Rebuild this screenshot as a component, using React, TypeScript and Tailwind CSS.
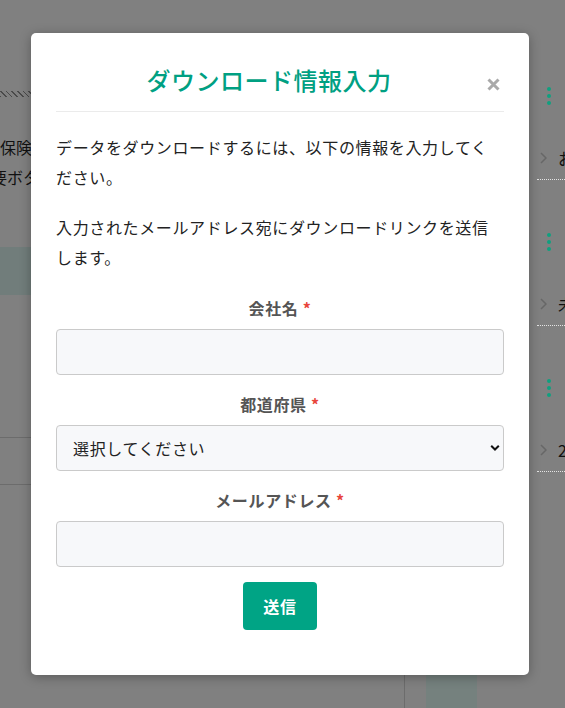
import React from "react";

const sideItems = [
  { id: 1, label: "お知らせ" },
  { id: 2, label: "未読" },
  { id: 3, label: "2024" },
];

function BackgroundPage() {
  return (
    <div className="flex h-full">
      <main className="flex w-[529px] shrink-0 flex-col overflow-hidden">
        <div className="mt-[91px] h-[6px] w-full bg-[repeating-linear-gradient(45deg,#4a4a4a_0px,#4a4a4a_1px,transparent_1px,transparent_4px)]" />
        <div className="mt-[35px] text-[16px] leading-[30px] text-[#111] whitespace-nowrap">
          <p>保険</p>
          <p className="-ml-[9px]">要ボタン</p>
        </div>
        <div className="mt-[55px] h-[48px] w-full bg-[#717d7b]" />
        <div className="mt-[142px] h-[48px] w-full border-y border-[#6c6c6c]" />
        <div className="mt-auto flex h-[40px]">
          <div className="w-[405px] shrink-0 border-r border-[#6c6c6c]" />
          <div className="ml-[21px] w-[51px] bg-[#75817e]" />
        </div>
      </main>
      <aside className="min-w-0 flex-1 overflow-hidden pl-[8px] pt-[34px]">
        {sideItems.map((item) => (
          <div
            key={item.id}
            className="flex h-[146px] flex-col border-b border-dotted border-[#e4e4e4]"
          >
            <div className="ml-[10px] mt-[53px] flex flex-col gap-[3px]">
              <span className="h-1 w-1 rounded-full bg-[#0fa07f]" />
              <span className="h-1 w-1 rounded-full bg-[#0fa07f]" />
              <span className="h-1 w-1 rounded-full bg-[#0fa07f]" />
            </div>
            <div className="mt-[41px] flex h-6 items-center gap-[11px] whitespace-nowrap pl-[3px]">
              <svg width="7" height="12" viewBox="0 0 7 12" fill="none" className="shrink-0">
                <path d="M1 1l5 5-5 5" stroke="#676767" strokeWidth="1.5" />
              </svg>
              <span className="text-[16px] text-[#111]">{item.label}</span>
            </div>
          </div>
        ))}
      </aside>
    </div>
  );
}

function Field({ label, children, first }: { label: string; children: React.ReactNode; first?: boolean }) {
  return (
    <div className={first ? "" : "mt-[17px]"}>
      <label className="mb-2 block text-center text-[16px] font-bold leading-[25px] tracking-[0.04em] text-[#555]">
        {label} <span className="text-[#e8453c]">*</span>
      </label>
      {children}
    </div>
  );
}

function DownloadModal() {
  return (
    <div className="absolute left-[31px] top-[33px] w-[498px] rounded-[5px] bg-white px-[25px] pb-[45px] pt-[29px] shadow-[0_2px_12px_rgba(0,0,0,0.3)]">
      <div className="flex items-start border-b border-[#ebebeb] pb-[13px]">
        <h2 className="flex-1 text-center text-[24px] font-medium leading-[36px] tracking-[0.02em] text-[#00a082]">
          ダウンロード情報入力
        </h2>
        <button type="button" className="mt-[16px] flex w-[22px] justify-center">
          <svg width="13" height="13" viewBox="0 0 13 13">
            <path d="M1.5 1.5l10 10M11.5 1.5l-10 10" stroke="#a9a9a9" strokeWidth="3" />
          </svg>
        </button>
      </div>

      <div className="text-[16px] leading-[29.6px] tracking-[0.04em] text-[#222]">
        <p className="mt-[21px]">データをダウンロードするには、以下の情報を入力してください。</p>
        <p className="mt-[21px]">入力されたメールアドレス宛にダウンロードリンクを送信します。</p>
      </div>

      <form className="mt-[24px]" onSubmit={(e) => e.preventDefault()}>
        <Field label="会社名" first>
          <input
            type="text"
            className="block h-[46px] w-full rounded-[4px] border border-[#cacaca] bg-[#f7f8fa] px-4 text-[16px] outline-none"
          />
        </Field>
        <Field label="都道府県">
          <div className="relative">
            <select className="block h-[46px] w-full appearance-none rounded-[4px] border border-[#cacaca] bg-[#f7f8fa] pl-[16px] text-[16px] tracking-[0.04em] text-[#222] outline-none">
              <option>選択してください</option>
              <option>東京都</option>
              <option>大阪府</option>
            </select>
            <svg
              width="10"
              height="7"
              viewBox="0 0 10 7"
              className="pointer-events-none absolute right-[4px] top-1/2 -translate-y-1/2"
            >
              <path d="M1.2 1.2L5 5l3.8-3.8" stroke="#111" strokeWidth="2" fill="none" />
            </svg>
          </div>
        </Field>
        <Field label="メールアドレス">
          <input
            type="email"
            className="block h-[46px] w-full rounded-[4px] border border-[#cacaca] bg-[#f7f8fa] px-4 text-[16px] outline-none"
          />
        </Field>
        <button
          type="submit"
          className="mx-auto mt-[15px] block h-[48px] w-[74px] rounded-[4px] bg-[#00a485] text-[16px] font-bold tracking-[0.04em] text-white"
        >
          送信
        </button>
      </form>
    </div>
  );
}

export default function App() {
  return (
    <div className="relative h-[708px] w-[565px] overflow-hidden bg-[#808080] font-['Noto_Sans_CJK_JP','Noto_Sans',sans-serif]">
      <BackgroundPage />
      <DownloadModal />
    </div>
  );
}
